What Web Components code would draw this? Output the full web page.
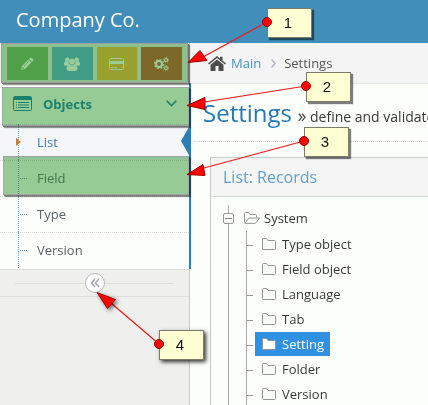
<!DOCTYPE html>
<html lang="en">
<head>
<meta charset="utf-8">
<title>Settings</title>
<style>
  html { height: 100%; }
  body { margin: 0; min-height: 100%; overflow: hidden; font: 13px/20px "Open Sans", sans-serif; color: #393939; background: #fcfefc; }
</style>
</head>
<body>
<admin-page></admin-page>
<script>
const define = (name, html, setup) => {
  const tpl = document.createElement('template');
  tpl.innerHTML = html;
  customElements.define(name, class extends HTMLElement {
    constructor() {
      super();
      this.attachShadow({ mode: 'open' }).append(tpl.content.cloneNode(true));
    }
    connectedCallback() { if (setup) setup(this, this.shadowRoot); }
  });
};

define('app-header', `
<style>
  :host { display: flex; align-items: center; height: 43px; padding: 0 16px; background: #408eb9; color: #fff; }
  a { color: inherit; text-decoration: none; font-size: 20px; line-height: 28px; margin-bottom: 4px; }
</style>
<a href="#"><slot></slot></a>`);

define('shortcut-bar', `
<style>
  :host { display: flex; gap: 4px; padding: 4px 7px 3px; height: 33px; }
  button { flex: 1; display: grid; place-items: center; border: 0; padding: 0; color: #fff; }
  .edit { background: #86c87c; } .users { background: #6bc3dd; } .card { background: #ffc850; } .cogs { background: #d08243; }
  svg { display: block; }
</style>
<button class="edit" aria-label="Edit"><svg width="14" height="14" viewBox="0 0 14 14" fill="currentColor"><path d="M1 13l1-4 6.400-6.400 3 3L5 12z"/><path d="M9 2l1.200-1.200q.8-.6 1.600.1l1.300 1.300q.7.800 0 1.500L12 5z"/><path d="M2.600 9.800l1.600 1.600-2 .5z" fill="#86c87c"/><path d="M4 9l5-5" stroke="#86c87c" stroke-width=".7"/></svg></button>
<button class="users" aria-label="Users"><svg width="16" height="14" viewBox="0 0 16 14" fill="currentColor"><circle cx="3.200" cy="2.700" r="2.200"/><circle cx="12.800" cy="2.700" r="2.200"/><path d="M0 8V6q.3-2 1.500-1.500 1.600 1 3 .2.200 2 1.300 3L4 8.500H1Q0 8.500 0 8zM16 8V6q-.3-2-1.500-1.500-1.600 1-3 .2-.2 2-1.300 3l1.800.8h3q1 0 1-.5z"/><circle cx="8" cy="4.700" r="2.900"/><path d="M2.600 12q0-4.500 2.600-4.500 2.800 1.700 5.600 0 2.600 0 2.600 4.500 0 2-2 2H4.600q-2 0-2-2z"/></svg></button>
<button class="card" aria-label="Cards"><svg width="15" height="12" viewBox="0 0 15 12"><path fill="none" stroke="currentColor" d="M1.500.5h12q1 0 1 1v9q0 1-1 1h-12q-1 0-1-1v-9q0-1 1-1z"/><path fill="currentColor" d="M1 3h13v3H1zM2 9h2v1H2zM5 9h3v1H5z"/></svg></button>
<button class="cogs" aria-label="Preferences"><svg width="15" height="14" viewBox="0 0 15 14" fill="none" stroke="currentColor"><circle cx="5" cy="7" r="3" stroke-width="2"/><circle cx="5" cy="7" r="4.400" stroke-width="1.400" stroke-dasharray="1.700 1.750"/><circle cx="12" cy="3" r="1.500" stroke-width="1.200"/><circle cx="12" cy="3" r="2.500" stroke-dasharray="1 .96"/><circle cx="12" cy="11" r="1.500" stroke-width="1.200"/><circle cx="12" cy="11" r="2.500" stroke-dasharray="1 .96"/></svg></button>`);

define('nav-group', `
<style>
  :host { display: block; background: #fcfefc; border-right: 2px solid #2b7dbc; margin-right: -2px; }
  button { font: 700 13px/20px "Open Sans", sans-serif; color: #2ba0bc; width: 100%; height: 41px; display: flex; align-items: center; gap: 11px; padding: 0 12px 0 13px; border: 0; background: none; text-align: left; }
  .label { flex: 1; }
  svg { display: block; }
  ul { list-style: none; margin: 0; padding: 0 0 1px; }
</style>
<button aria-expanded="true">
<svg width="19" height="15" viewBox="0 0 19 15"><path fill="none" stroke="currentColor" d="M1.500.5h16q1 0 1 1v12q0 1-1 1h-16q-1 0-1-1v-12q0-1 1-1z"/><path fill="currentColor" d="M1 1h17v3H1zM3 6h1v1H3zM5 6h11v1H5zM3 8.500h1v1H3zM5 8.500h11v1H5zM3 11h1v1H3zM5 11h11v1H5z"/></svg>
<span class="label"></span>
<svg width="11" height="7" viewBox="0 0 11 7" fill="none" stroke="currentColor" stroke-width="1.600"><path d="M.7.800l4.800 4.800L10.300.8"/></svg>
</button>
<ul><slot></slot></ul>`, (el, root) => { root.querySelector('.label').textContent = el.getAttribute('label'); });

define('nav-item', `
<style>
  :host { display: block; position: relative; box-sizing: border-box; height: 36px; border-top: 1px dotted #d5d8d8; }
  :host::before { content: ""; position: absolute; left: 18px; top: -1px; bottom: 0; border-left: 1px dotted #77a9cc; }
  :host::after { content: ""; position: absolute; left: 20px; top: 17px; width: 7px; border-top: 1px dotted #77a9cc; }
  a { display: block; padding: 7px 0 8px 37px; color: #5c6266; text-decoration: none; }
  :host([tinted]) a { color: #6a9874; }
  :host([active]) { background: #f4f6fa; }
  :host([active]) a { color: #3b7bb5; }
  :host([active])::after { left: 16px; top: 13px; width: 0; border: solid transparent; border-width: 4px 0 4px 5px; border-left-color: #c2803a; }
  i { display: none; }
  :host([active]) i { display: block; position: absolute; right: 0; top: 2px; border: solid transparent; border-width: 14px 8px 14px 0; border-right-color: #2b7dbc; }
</style>
<a href="#"><slot></slot></a><i></i>`, el => el.setAttribute('role', 'listitem'));

define('collapse-toggle', `
<style>
  :host { display: flex; align-items: center; height: 26px; padding: 0 15px; border: solid #dcdede; border-width: 1px 0; }
  :host::before, :host::after { content: ""; flex: 1; border-top: 1px solid #dcdede; }
  button { box-sizing: border-box; width: 20px; height: 20px; border: 1px solid #bbb; border-radius: 50%; background: #fff; color: #a4a6ac; padding: 0; display: grid; place-items: center; }
</style>
<button aria-label="Collapse sidebar"><svg width="10" height="10" viewBox="0 0 10 10" fill="none" stroke="currentColor" stroke-width="1.500"><path d="M5 1L1.500 5 5 9M9 1L5.500 5 9 9"/></svg></button>`);

define('bread-crumbs', `
<style>
  :host { display: flex; align-items: center; height: 40px; padding: 0 18px; background: #f4f4f4; border-bottom: 1px solid #e3e5e5; color: #555; white-space: nowrap; }
  a { color: #4c8fbd; text-decoration: none; margin: 0 10px 0 5px; }
  .sep { margin-right: 8px; }
</style>
<svg width="18" height="15" viewBox="0 0 18 15" fill="#4c4c4c"><path d="M0 7.500L9 0l3 2.500V.8h2.500v3.800L18 7.500l-1 1.100L9 2 1 8.600z"/><path d="M2.500 8.800L9 3.500l6.500 5.300V15h-5v-5h-3v5h-5z"/></svg>
<a href="#">Main</a>
<svg class="sep" width="5" height="9" viewBox="0 0 5 9" fill="none" stroke="#b2b6bf" stroke-width="1.500"><path d="M.5.500l3.500 4-3.500 4"/></svg>
<span>Settings</span>`);

define('page-title', `
<style>
  :host { display: flex; align-items: baseline; gap: 6px; margin: 11px 0 0 4px; height: 46px; padding-left: 9px; border-bottom: 1px dotted #d5d8d8; white-space: nowrap; }
  h1 { font-size: 24px; line-height: 36px; font-weight: 400; color: #2679b5; margin: 0; }
  small { font-size: 14px; display: flex; align-items: baseline; gap: 4px; }
</style>
<h1>Settings</h1><small><svg width="8" height="9" viewBox="0 0 8 9" fill="none" stroke="#444" stroke-width="1.300"><path d="M.7.700l3 3.600-3 3.600M4 .7l3 3.600-3 3.600"/></svg><span>define and validate</span></small>`);

define('widget-box', `
<style>
  :host { display: flex; flex-direction: column; flex: 1; margin: 15px 0 0 20px; border: solid #c8caca; border-width: 1px 0 0 1px; }
  h2 { font-size: 16px; line-height: 38px; font-weight: 400; color: #669fc7; margin: 0; padding-left: 12px; background: #f4f5f4; border-bottom: 1px solid #d5d7d7; }
</style>
<h2>List: Records</h2><slot></slot>`);

define('record-tree', `
<style>
  :host { display: flex; flex: 1; padding: 8px 0 0 12px; }
  ul { list-style: none; margin: 0; padding: 0; flex: 1; }
  .branch { flex: 1; position: relative; height: 100%; }
  .branch::before { content: ""; position: absolute; left: 5px; top: 0; bottom: 0; border-left: 1px solid #aaa; }
  .head { display: flex; align-items: center; height: 26px; gap: 4px; }
  .head button { position: relative; box-sizing: border-box; width: 11px; height: 11px; padding: 0; margin-right: 6px; border: 1px solid #999; border-radius: 2px; background: #fcfefc; display: grid; place-items: center; }
  .head button::before { content: ""; width: 7px; border-top: 1px solid #888; }
</style>
<ul role="tree"><li class="branch" role="treeitem" aria-expanded="true">
<div class="head"><button aria-label="Collapse System"></button>
<svg width="16" height="12" viewBox="0 0 16 12" fill="none" stroke="#949694"><path d="M.5 10.500V1.500q0-1 1-1h3l1.500 2h5.500q1 0 1 1v2M.8 11.300L4.200 6.800q.6-.8 1.600-.8h9.700l-3.200 4.500q-.6.900-1.600.9H1.200z"/></svg>
<span>System</span></div>
<ul role="group"><slot></slot></ul>
</li></ul>`);

define('tree-leaf', `
<style>
  :host { display: flex; align-items: center; position: relative; height: 25px; padding-left: 32px; }
  :host::before { content: ""; position: absolute; left: 23px; top: 0; bottom: 0; border-left: 1px solid #a8aaa8; }
  :host::after { content: ""; position: absolute; left: 24px; top: 14px; width: 6px; border-top: 1px solid #999; }
  a { display: flex; align-items: center; gap: 6px; height: 24px; padding: 0 6px 0 7px; color: inherit; text-decoration: none; }
  svg { display: block; }
  path { fill: #f8faf8; stroke: #949694; }
  :host([selected]) a { background: #3091e2; color: #fff; }
  :host([selected]) path { fill: #fff; }
</style>
<a href="#"><svg width="14" height="12" viewBox="0 0 14 12"><path d="M.5 10.500v-9q0-1 1-1h3L6 2.500h6.500q1 0 1 1v7q0 1-1 1h-11q-1 0-1-1z"/></svg><span><slot></slot></span></a>`, el => el.setAttribute('role', 'treeitem'));

define('callout-layer', `
<style>
  :host { position: absolute; inset: 0; pointer-events: none; }
  .mark { position: absolute; box-sizing: border-box; left: 2px; width: 187px; height: 39px; background: #98cc98; border: 1px solid #a8a8a8; mix-blend-mode: multiply; box-shadow: 1px 1px 0 #777, 2px 2px 1px #999; }
  .m1 { top: 43px; left: 1px; height: 40px; } .m2 { top: 87px; } .m3 { top: 156px; left: 3px; width: 186px; }
  .note { position: absolute; box-sizing: border-box; width: 45px; height: 30px; border: 1px solid #7c7c6c; background: #feffd2; box-shadow: 2px 2px 1px rgba(0,0,0,.5); color: #111; font: 15px/28px "Liberation Sans", sans-serif; text-align: center; padding-right: 3px; }
  .n1 { left: 267px; top: 8px; } .n2 { left: 306px; top: 72px; } .n3 { left: 304px; top: 127px; }
  .n4 { left: 159px; top: 330px; box-shadow: 2px 2px 4px rgba(0,0,0,.8); }
  svg { position: absolute; left: 0; top: 0; overflow: visible; }
</style>
<div class="mark m1"></div><div class="mark m2"></div><div class="mark m3"></div>
<div class="note n1">1</div><div class="note n2">2</div><div class="note n3">3</div><div class="note n4">4</div>
<svg width="428" height="405" viewBox="0 0 428 405">
<g stroke="#f01818" stroke-width="1.200"><path d="M267 22L203 57M306 86L204 102M304 141L204 168M159 344L111 303"/></g>
<g fill="#fe0000" stroke="#900" stroke-width="1"><path d="M188 62.500l12-12 7 10z"/><path d="M187 105.500l18-8 0 12z"/><path d="M187 174.500l16-10 2 11z"/><path d="M97 292.500l18.500 7-8 9z" style="filter:drop-shadow(2px 2px 2px rgba(0,0,0,.55))"/>
<circle cx="267" cy="22" r="4.500"/><circle cx="306" cy="86" r="4.500"/><circle cx="304" cy="141" r="4.500"/><circle cx="159" cy="344" r="4.500"/></g>
</svg>`);

define('admin-page', `
<style>
  :host { display: flex; flex-direction: column; min-height: 100vh; position: relative; }
  .body { display: flex; flex: 1; }
  aside { flex: none; box-sizing: border-box; width: 190px; border-right: 1px solid #c8caca; background: #eff0ee; }
  main { flex: 1; min-width: 0; display: flex; flex-direction: column; overflow: hidden; }
  nav { position: relative; }
</style>
<app-header>Company Co.</app-header>
<div class="body">
<aside><shortcut-bar></shortcut-bar>
<nav><nav-group label="Objects"><nav-item active>List</nav-item><nav-item tinted>Field</nav-item><nav-item>Type</nav-item><nav-item>Version</nav-item></nav-group></nav>
<collapse-toggle></collapse-toggle></aside>
<main><bread-crumbs></bread-crumbs><page-title></page-title>
<widget-box><record-tree><tree-leaf>Type object</tree-leaf><tree-leaf>Field object</tree-leaf><tree-leaf>Language</tree-leaf><tree-leaf>Tab</tree-leaf><tree-leaf selected>Setting</tree-leaf><tree-leaf>Folder</tree-leaf><tree-leaf>Version</tree-leaf></record-tree></widget-box></main>
</div>
<callout-layer></callout-layer>`);
</script>
</body>
</html>
